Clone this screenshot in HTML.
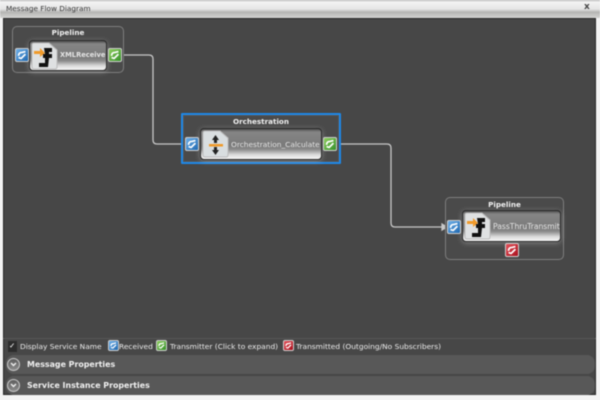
<!DOCTYPE html>
<html><head><meta charset="utf-8"><style>
html,body{margin:0;padding:0;width:600px;height:400px;overflow:hidden;background:#f4f4f4}
*{box-sizing:border-box}
body{font-family:"Liberation Sans","DejaVu Sans",sans-serif;position:relative}
#w{position:absolute;left:0;top:0;width:600px;height:400px;filter:blur(.4px)}
.a{position:absolute}
.title{left:0;top:0;width:600px;height:18px;background:linear-gradient(#a9a9a9 0,#f4f4f4 10%,#e6e6e6 50%,#b4b4b2 68%,#d6d6d4 100%);font:7.3px "DejaVu Sans",sans-serif;color:#333;padding:4px 0 0 6px;white-space:nowrap}
.main{left:3px;top:18px;width:593px;height:377px;background:#474747;border:1px solid #2a2a2a}
.grp{border:1.5px solid #7e7e7e;border-radius:5px;background:#4a4a4a}
.gt{left:0;right:0;text-align:center;color:#f2f2f2;font:bold 7.2px "DejaVu Sans",sans-serif;white-space:nowrap}
.card{border:1px solid #2a2a2a;border-radius:4px;background:linear-gradient(#4e4e4e 0,#858585 10%,#7a7a7a 55%,#8a8a8a 68%,#d8d8d8 85%,#f8f8f8 100%);box-shadow:0 1px 6px rgba(255,255,255,.32)}
.ico{left:1px;top:1px;width:27px;height:28px}
.nm{color:#e6e6e6;font:7.4px "DejaVu Sans",sans-serif;white-space:nowrap;top:11px}
.st{width:14px;height:14px;border-radius:2px;border:1px solid #cfcfcf;overflow:hidden}
.st svg{position:absolute;left:0;top:0;width:100%;height:100%}
.b{background:linear-gradient(135deg,#6fb0e8,#1f68b0)}
.g{background:linear-gradient(135deg,#8fce5f,#35902a)}
.r{background:linear-gradient(135deg,#e4535c,#a80f1c)}
.leg{color:#ececec;font:7.45px "DejaVu Sans",sans-serif;white-space:nowrap;top:342px}
.bar{left:6px;width:589px;height:19px;border-radius:8px;background:#585858;color:#f0f0f0;font:bold 7.9px "DejaVu Sans",sans-serif;padding:5px 0 0 21px}
.dot{left:1px;top:3px;width:13px;height:13px;border-radius:50%;background:linear-gradient(#5e5e5e,#8c8c8c);border:1px solid #c8c8c8}
</style></head><body><div id="w">
<div class="a title">Message Flow Diagram</div>
<div class="a" style="left:584px;top:2px;font:bold 9px 'DejaVu Sans',sans-serif;color:#444">x</div>
<div class="a main"></div>
<div class="a" style="left:3px;top:338px;width:593px;height:1px;background:#565656"></div>

<svg class="a" style="left:0;top:0" width="600" height="400" fill="none" stroke="#c8c8c8" stroke-width="1.3">
<path d="M121 55H149Q153 55 153 59V140Q153 144 157 144H186"/>
<path d="M336 144H387Q391 144 391 148V223Q391 227 395 227H447"/>
<path d="M442 224L447 227L442 230Z" fill="#c8c8c8"/>
</svg>

<div class="a grp" style="left:12px;top:26px;width:112px;height:47px">
<div class="a gt" style="top:1px">Pipeline</div>
</div>
<div class="a card" style="left:29px;top:40px;width:78px;height:31px">
<svg class="a ico" viewBox="0 0 27 28"><path d="M1 3Q1 1 3 1H18L26 8V25Q26 27 24 27H3Q1 27 1 25Z" fill="#dfe1e2" stroke="#bbb"/><path d="M3 9H9V6L14 11L9 15V12H3Z" fill="#f09a2a"/><path d="M21 6H13L14 12H12V16H14V21H8V25H17L18 16H21V12H18V10H21Z" fill="#111"/></svg>
<div class="a nm" style="left:30px;top:10px;font-weight:bold;font-size:6.7px">XMLReceive</div>
</div>
<div class="a st b" style="left:15px;top:48px"><svg viewBox="0 0 14 14"><path d="M3 8Q3 4 7 4L11 3M3 10L6 11L11 6" fill="none" stroke="#fff" stroke-width="2"/></svg></div>
<div class="a st g" style="left:108px;top:48px"><svg viewBox="0 0 14 14"><path d="M3 8Q3 4 7 4L11 3M3 10L6 11L11 6" fill="none" stroke="#fff" stroke-width="2"/></svg></div>

<div class="a grp" style="left:181px;top:113px;width:160px;height:51px;border:2.5px solid #1e88e8;border-radius:1px;box-shadow:inset 0 0 0 1px #555">
<div class="a gt" style="top:2px">Orchestration</div>
</div>
<div class="a card" style="left:200px;top:128px;width:122px;height:32px">
<svg class="a ico" viewBox="0 0 27 28"><path d="M1 3Q1 1 3 1H18L26 8V25Q26 27 24 27H3Q1 27 1 25Z" fill="#d9dee0" stroke="#bbb"/><path d="M13.5 5L17 10H15V13H12V10H10Z" fill="#222"/><path d="M13.5 25L17 20H15V17H12V20H10Z" fill="#222"/><rect x="7" y="14" width="14" height="2.5" fill="#f09a2a"/></svg>
<div class="a nm" style="left:30px">Orchestration_Calculate</div>
</div>
<div class="a st b" style="left:185px;top:137px"><svg viewBox="0 0 14 14"><path d="M3 8Q3 4 7 4L11 3M3 10L6 11L11 6" fill="none" stroke="#fff" stroke-width="2"/></svg></div>
<div class="a st g" style="left:323px;top:137px"><svg viewBox="0 0 14 14"><path d="M3 8Q3 4 7 4L11 3M3 10L6 11L11 6" fill="none" stroke="#fff" stroke-width="2"/></svg></div>

<div class="a grp" style="left:445px;top:197px;width:119px;height:63px">
<div class="a gt" style="top:2px">Pipeline</div>
</div>
<div class="a card" style="left:462px;top:210px;width:99px;height:32px">
<svg class="a ico" viewBox="0 0 27 28"><path d="M1 3Q1 1 3 1H18L26 8V25Q26 27 24 27H3Q1 27 1 25Z" fill="#dfe1e2" stroke="#bbb"/><path d="M3 9H9V6L14 11L9 15V12H3Z" fill="#f09a2a"/><path d="M21 6H13L14 12H12V16H14V21H8V25H17L18 16H21V12H18V10H21Z" fill="#111"/></svg>
<div class="a nm" style="left:30px;font-size:7.6px">PassThruTransmit</div>
</div>
<div class="a st b" style="left:447px;top:220px"><svg viewBox="0 0 14 14"><path d="M3 8Q3 4 7 4L11 3M3 10L6 11L11 6" fill="none" stroke="#fff" stroke-width="2"/></svg></div>
<div class="a st r" style="left:505px;top:243px"><svg viewBox="0 0 14 14"><path d="M3 8Q3 4 7 4L11 3M3 10L6 11L11 6" fill="none" stroke="#fff" stroke-width="2"/></svg></div>

<div class="a" style="left:8px;top:341px;width:9px;height:11px;background:#2c2c2c"></div>
<div class="a leg" style="left:9px;top:341px;color:#fff">✓</div>
<div class="a leg" style="left:20px">Display Service Name</div>
<div class="a st b" style="left:108px;top:340px;width:11px;height:11px"><svg viewBox="0 0 14 14"><path d="M3 8Q3 4 7 4L11 3M3 10L6 11L11 6" fill="none" stroke="#fff" stroke-width="2"/></svg></div>
<div class="a leg" style="left:119px">Received</div>
<div class="a st g" style="left:156px;top:340px;width:11px;height:11px"><svg viewBox="0 0 14 14"><path d="M3 8Q3 4 7 4L11 3M3 10L6 11L11 6" fill="none" stroke="#fff" stroke-width="2"/></svg></div>
<div class="a leg" style="left:170px">Transmitter (Click to expand)</div>
<div class="a st r" style="left:283px;top:340px;width:11px;height:11px"><svg viewBox="0 0 14 14"><path d="M3 8Q3 4 7 4L11 3M3 10L6 11L11 6" fill="none" stroke="#fff" stroke-width="2"/></svg></div>
<div class="a leg" style="left:296px">Transmitted (Outgoing/No Subscribers)</div>

<div class="a bar" style="top:355px">Message Properties<div class="a dot"><svg class="a" style="left:2px;top:3px" width="7" height="5" fill="none" stroke="#eee" stroke-width="1.4"><path d="M1 1L3.5 3.5L6 1"/></svg></div></div>
<div class="a bar" style="top:376px">Service Instance Properties<div class="a dot"><svg class="a" style="left:2px;top:3px" width="7" height="5" fill="none" stroke="#eee" stroke-width="1.4"><path d="M1 1L3.5 3.5L6 1"/></svg></div></div>
</div></body></html>
